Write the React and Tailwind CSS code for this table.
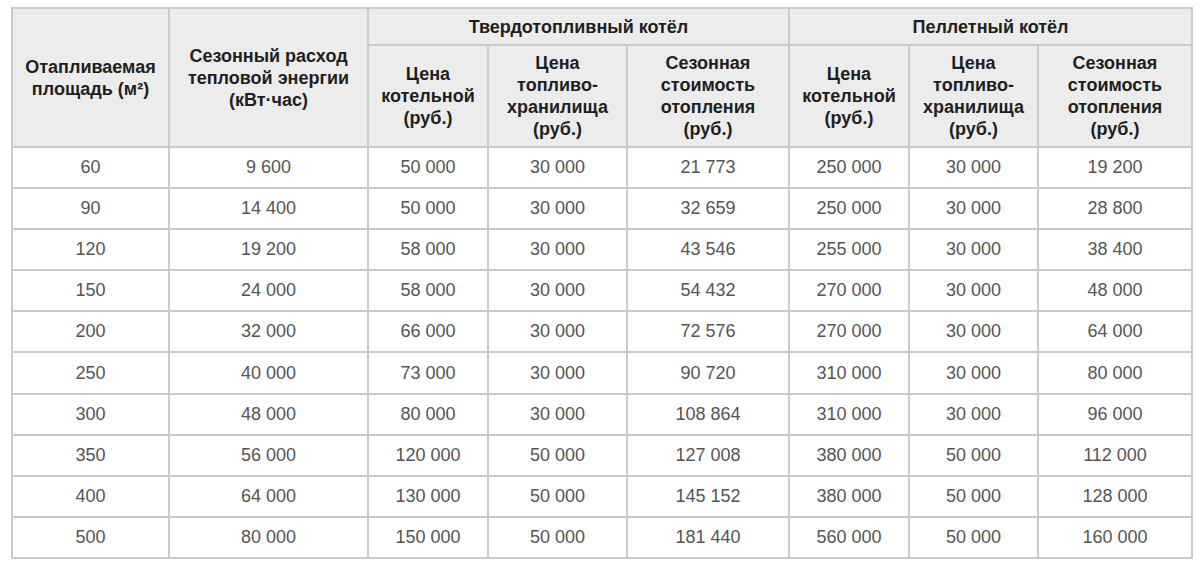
import React from "react";

const rows = [
  ["60", "9 600", "50 000", "30 000", "21 773", "250 000", "30 000", "19 200"],
  ["90", "14 400", "50 000", "30 000", "32 659", "250 000", "30 000", "28 800"],
  ["120", "19 200", "58 000", "30 000", "43 546", "255 000", "30 000", "38 400"],
  ["150", "24 000", "58 000", "30 000", "54 432", "270 000", "30 000", "48 000"],
  ["200", "32 000", "66 000", "30 000", "72 576", "270 000", "30 000", "64 000"],
  ["250", "40 000", "73 000", "30 000", "90 720", "310 000", "30 000", "80 000"],
  ["300", "48 000", "80 000", "30 000", "108 864", "310 000", "30 000", "96 000"],
  ["350", "56 000", "120 000", "50 000", "127 008", "380 000", "50 000", "112 000"],
  ["400", "64 000", "130 000", "50 000", "145 152", "380 000", "50 000", "128 000"],
  ["500", "80 000", "150 000", "50 000", "181 440", "560 000", "50 000", "160 000"],
];

const th = "border-2 border-[#cacaca] bg-[#ececec] text-[#1e1e1e] font-bold text-center align-middle text-[18px] leading-[22px] p-0";
const td = "border-2 border-[#cacaca] text-[#555555] text-center align-middle text-[18px] p-0 h-[41.1px]";

export default function App() {
  return (
    <div className="w-[1200px] h-[566px] bg-white pt-[7px] pl-[11px]" style={{ fontFamily: '"Liberation Sans", Arial, sans-serif' }}>
      <table className="border-collapse table-fixed w-[1180px]">
        <colgroup>
          <col className="w-[157px]" />
          <col className="w-[199px]" />
          <col className="w-[120px]" />
          <col className="w-[139px]" />
          <col className="w-[162px]" />
          <col className="w-[120px]" />
          <col className="w-[129px]" />
          <col className="w-[154px]" />
        </colgroup>
        <thead>
          <tr className="h-[37px]">
            <th rowSpan={2} className={th}>Отапливаемая<br />площадь (м²)</th>
            <th rowSpan={2} className={th}>Сезонный расход<br />тепловой энергии<br />(кВт·час)</th>
            <th colSpan={3} className={th}>Твердотопливный котёл</th>
            <th colSpan={3} className={th}>Пеллетный котёл</th>
          </tr>
          <tr className="h-[102px]">
            <th className={th}>Цена<br />котельной<br />(руб.)</th>
            <th className={th}>Цена<br />топливо-<br />хранилища<br />(руб.)</th>
            <th className={th}>Сезонная<br />стоимость<br />отопления<br />(руб.)</th>
            <th className={th}>Цена<br />котельной<br />(руб.)</th>
            <th className={th}>Цена<br />топливо-<br />хранилища<br />(руб.)</th>
            <th className={th}>Сезонная<br />стоимость<br />отопления<br />(руб.)</th>
          </tr>
        </thead>
        <tbody>
          {rows.map((r, i) => (
            <tr key={i}>
              {r.map((c, j) => (
                <td key={j} className={td}>{c}</td>
              ))}
            </tr>
          ))}
        </tbody>
      </table>
    </div>
  );
}
